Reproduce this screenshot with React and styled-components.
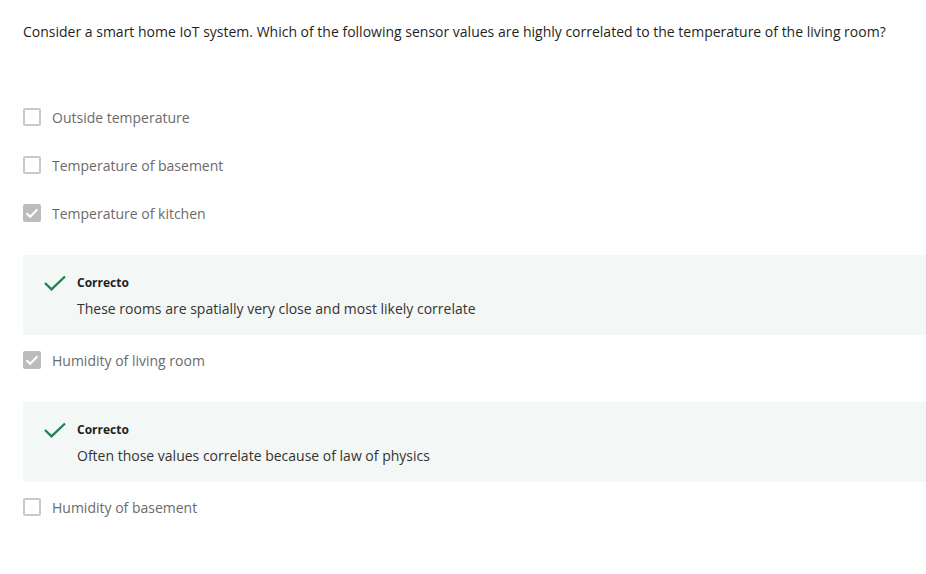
import React from "react";
import styled, { createGlobalStyle } from "styled-components";

const Global = createGlobalStyle`
  html, body { margin: 0; padding: 0; background: #fff; }
  body { font-family: "Open Sans", "Noto Sans", sans-serif; }
`;

const Page = styled.div`
  padding: 22px 0 0 23px;
`;

const Question = styled.p`
  margin: 0 0 51px;
  font-size: 14px;
  line-height: 20px;
  color: #1f1f1f;
`;

const Option = styled.label`
  display: flex;
  align-items: center;
  gap: 11px;
  height: 48px;
  font-size: 14px;
  color: #6b6b6b;
`;

const Box = styled.span`
  box-sizing: border-box;
  width: 18px;
  height: 18px;
  border-radius: 2px;
  border: 2px solid ${(p) => (p.$checked ? "#bcbcbc" : "#c8c8c8")};
  background: ${(p) => (p.$checked ? "#bcbcbc" : "#fff")};
  display: flex;
  align-items: center;
  justify-content: center;
`;

const Feedback = styled.div`
  margin: 18px 0 1px;
  background: #f3f8f6;
  padding: 19px 0 16px 21px;
  display: grid;
  grid-template-columns: 22px 1fr;
  column-gap: 11px;
  row-gap: 7px;
`;

const Icon = styled.div`
  grid-row: 1;
  display: flex;
  align-items: center;
`;

const Title = styled.div`
  font-size: 12px;
  line-height: 18px;
  font-weight: 700;
  color: #1f1f1f;
`;

const Explanation = styled.div`
  grid-column: 2;
  font-size: 14px;
  line-height: 20px;
  color: #333;
`;

const Check = () => (
  <svg width="14" height="14" viewBox="0 0 14 14" fill="none">
    <path d="M1.5 7.2 L5.2 10.8 L12.5 3.2" stroke="#fff" strokeWidth="2" />
  </svg>
);

const options = [
  { text: "Outside temperature" },
  { text: "Temperature of basement" },
  { text: "Temperature of kitchen", checked: true, feedback: "These rooms are spatially very close and most likely correlate" },
  { text: "Humidity of living room", checked: true, feedback: "Often those values correlate because of law of physics" },
  { text: "Humidity of basement" },
];

export default function App() {
  return (
    <Page>
      <Global />
      <Question>
        Consider a smart home IoT system. Which of the following sensor values are highly correlated to the temperature of the living room?
      </Question>
      {options.map((o) => (
        <React.Fragment key={o.text}>
          <Option>
            <Box $checked={o.checked}>{o.checked && <Check />}</Box>
            {o.text}
          </Option>
          {o.feedback && (
            <Feedback>
              <Icon>
                <svg width="22" height="16" viewBox="0 0 22 16" fill="none">
                  <path d="M1 8 L7.5 14.3 L21 1.5" stroke="#1f8354" strokeWidth="2.4" />
                </svg>
              </Icon>
              <Title>Correcto</Title>
              <Explanation>{o.feedback}</Explanation>
            </Feedback>
          )}
        </React.Fragment>
      ))}
    </Page>
  );
}
